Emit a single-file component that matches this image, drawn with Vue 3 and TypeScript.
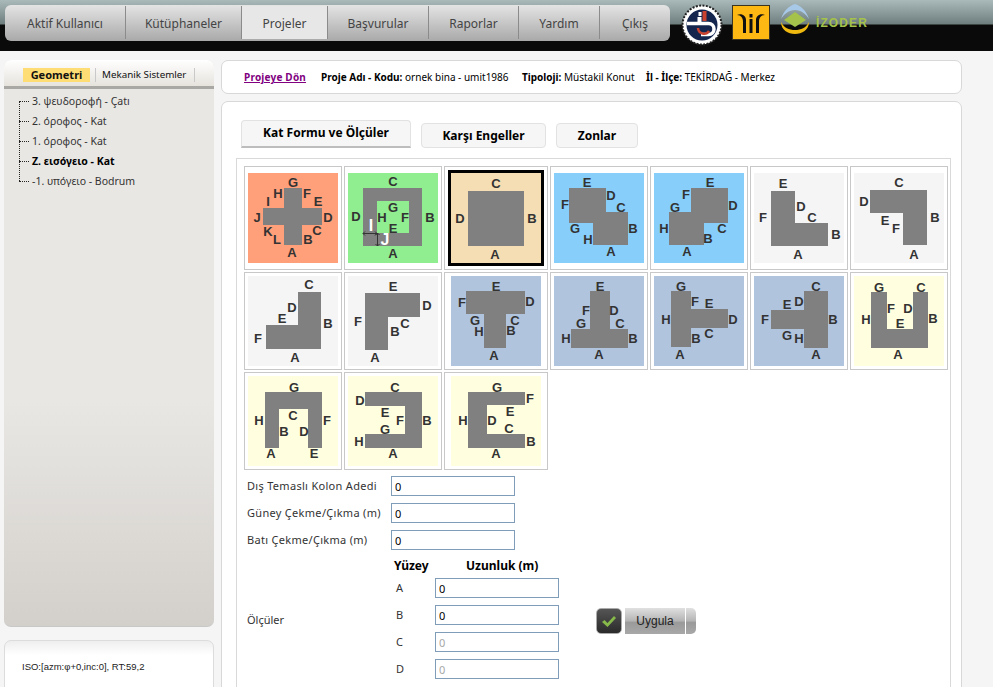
<template>
  <div class="page">
    <header class="topbar">
      <nav class="mainnav">
        <a
          v-for="item in navItems"
          :key="item.text"
          class="navitem"
          :class="{ active: item.active }"
          :style="{ width: item.width + 'px' }"
        >{{ item.text }}</a>
      </nav>
      <div class="logos">
        <svg class="logo-round" width="42" height="42" viewBox="0 0 42 42">
          <circle cx="21" cy="21" r="19.500" fill="#fff" />
          <circle cx="21" cy="21" r="19.500" fill="none" stroke="#222" stroke-width="2" stroke-dasharray="2 1.400" />
          <circle cx="21" cy="21" r="15.500" fill="#14264e" />
          <rect x="17.500" y="8" width="3" height="4" fill="#fff" />
          <rect x="21.500" y="7" width="4" height="10" fill="#c9412f" />
          <rect x="16.500" y="13" width="4" height="5" fill="#fff" />
          <path d="M6 19.500h21.500a5.500 5.500 0 0 1 0 11H20" fill="none" stroke="#fff" stroke-width="3.500" />
          <path d="M17 24a6 6 0 0 0 11 3" fill="none" stroke="#c9412f" stroke-width="2.500" />
        </svg>
        <svg class="logo-square" width="38" height="35" viewBox="0 0 38 35">
          <rect x="0.500" y="0.500" width="37" height="34" fill="#fdb813" stroke="#3a3320" />
          <path d="M5 10c4 0 6 3 6 7v11h3V15c0-4-4-7-9-5zM33 10c-4 0-6 3-6 7v11h-3V15c0-4 4-7 9-5z" fill="#111" />
          <rect x="17.500" y="9" width="3" height="3.500" fill="#111" />
          <rect x="17.500" y="14" width="3" height="14" fill="#111" />
        </svg>
        <div class="izoder">
          <svg width="32" height="32" viewBox="0 0 32 32">
            <path d="M2 15C5 6 10 2 16 0c6 2 11 6 14 15-3-5-8-9-14-9S5 10 2 15z" fill="#a8c8e8" />
            <path d="M16 8l11 8-11 7-11-7z" fill="#a5c34a" />
            <path d="M2 18c3 6 8 8 14 8s11-2 14-8c0 8-7 12-14 12S2 26 2 18z" fill="#f0b90f" />
          </svg>
          <span class="izoder-text">İZODER</span>
        </div>
      </div>
    </header>

    <div class="content">
      <aside class="leftcol">
        <div class="sidepanel">
          <div class="sidetabs">
            <span class="sidetab selected">Geometri</span>
            <span class="sidetab">Mekanik Sistemler</span>
          </div>
          <ul class="tree">
            <li
              v-for="floor in floors"
              :key="floor.text"
              :class="{ current: floor.current }"
            >{{ floor.text }}</li>
          </ul>
        </div>
        <div class="isobox">ISO:[azm:φ+0,inc:0], RT:59,2</div>
      </aside>

      <main class="rightcol">
        <div class="infobar">
          <a class="backlink">Projeye Dön</a>
          <span class="info info-name"><b>Proje Adı - Kodu:</b> ornek bina - umit1986</span>
          <span class="info info-type"><b>Tipoloji:</b> Müstakil Konut</span>
          <span class="info"><b>İl - İlçe:</b> TEKİRDAĞ - Merkez</span>
        </div>

        <div class="mainpanel">
          <div class="tabs">
            <button class="tab on">Kat Formu ve Ölçüler</button>
            <button class="tab engeller">Karşı Engeller</button>
            <button class="tab zonlar">Zonlar</button>
          </div>

          <div class="formbox">
            <div class="tiles">
              <div v-for="(tile, i) in tiles" :key="i" class="tile" :class="{ picked: tile.picked }">
                <svg class="shape" width="90" height="90" viewBox="0 0 90 90">
                  <rect width="90" height="90" :fill="tile.bg" />
                  <path v-if="tile.path" :d="tile.path" fill="#808080" fill-rule="evenodd" />
                  <polygon v-else :points="tile.points" fill="#808080" />
                  <g v-if="tile.arrows" stroke="#333" stroke-width="1" fill="none">
                    <path d="M15 60.500h14M17 58.500l-2 2 2 2M27 58.500l2 2-2 2" />
                    <path d="M29.500 60v13M27.500 62l2-2 2 2M27.500 71l2 2 2-2" />
                  </g>
                  <text
                    v-for="label in tile.labels"
                    :key="label.t"
                    :x="label.x"
                    :y="label.y"
                    class="letter"
                    :class="{ white: label.white }"
                  >{{ label.t }}</text>
                </svg>
              </div>
            </div>

            <div class="fields">
              <div v-for="field in fields" :key="field" class="field">
                <label>{{ field }}</label>
                <input type="text" value="0" />
              </div>
            </div>

            <div class="measures">
              <span class="measures-label">Ölçüler</span>
              <div class="measures-table">
                <div class="measures-head">
                  <b class="col-a">Yüzey</b>
                  <b class="col-b">Uzunluk (m)</b>
                </div>
                <div v-for="row in surfaces" :key="row.name" class="surface">
                  <span>{{ row.name }}</span>
                  <input type="text" value="0" :disabled="row.disabled" />
                </div>
              </div>
              <div class="applybtn">
                <span class="applyicon">
                  <svg width="16" height="13" viewBox="0 0 16 13">
                    <path d="M1 7l2.500-2 3 3L13 1l2 2-8.500 9z" fill="#86b84a" />
                  </svg>
                </span>
                <span class="applytext">Uygula</span>
                <span class="applyend"></span>
              </div>
            </div>
          </div>
        </div>
      </main>
    </div>
  </div>
</template>

<script setup lang="ts">
interface Label {
  t: string
  x: number
  y: number
  white?: boolean
}

interface Tile {
  bg: string
  points?: string
  path?: string
  arrows?: boolean
  picked?: boolean
  labels: Label[]
}

const navItems = [
  { text: 'Aktif Kullanıcı', width: 121 },
  { text: 'Kütüphaneler', width: 116 },
  { text: 'Projeler', width: 86, active: true },
  { text: 'Başvurular', width: 101 },
  { text: 'Raporlar', width: 90 },
  { text: 'Yardım', width: 81 },
  { text: 'Çıkış', width: 70 }
]

const floors = [
  { text: '3. ψευδοροφή - Çatı' },
  { text: '2. όροφος - Kat' },
  { text: '1. όροφος - Kat' },
  { text: 'Ζ. εισόγειο - Kat', current: true },
  { text: '-1. υπόγειο - Bodrum' }
]

const fields = ['Dış Temaslı Kolon Adedi', 'Güney Çekme/Çıkma (m)', 'Batı Çekme/Çıkma (m)']

const surfaces = [
  { name: 'A', disabled: false },
  { name: 'B', disabled: false },
  { name: 'C', disabled: true },
  { name: 'D', disabled: true }
]

// "A45,80" -> harf + konum
const parse = (s: string): Label[] =>
  s.split(' ').map((p) => {
    const [x, y] = p.slice(1).split(',')
    return { t: p[0], x: Number(x), y: Number(y) }
  })

const SALMON = '#ffa07a'
const GREEN = '#90ee90'
const WHEAT = '#f5deb3'
const SKY = '#87cefa'
const SMOKE = '#f5f5f5'
const STEEL = '#b0c4de'
const YELLOW = '#ffffe0'

const tiles: Tile[] = [
  {
    bg: SALMON,
    points: '36,15 54,15 54,35 74,35 74,52 54,52 54,72 36,72 36,52 15,52 15,35 36,35',
    labels: parse('G45,9 H30,20 F59,20 I20,28 E70,28 J9,44 D80,44 K20,58 C69,57 L29,66 B60,66 A44,79')
  },
  {
    bg: GREEN,
    path: 'M15 15H74V73H15ZM29 28V60H61V28Z',
    arrows: true,
    labels: [
      ...parse('C45,8 D8,43 B82,44 A45,80 G45,34 H34,44 F57,44 E45,55'),
      { t: 'I', x: 23, y: 52, white: true },
      { t: 'J', x: 37, y: 66, white: true }
    ]
  },
  {
    bg: WHEAT,
    picked: true,
    points: '17,18 73,18 73,73 17,73',
    labels: parse('C45,10 D9,45 B81,45 A44,81')
  },
  {
    bg: SKY,
    points: '15,15 52,15 52,39 74,39 74,72 39,72 39,50 15,50',
    labels: parse('E33,9 D57,22 C67,34 F11,31 B79,55 G21,55 H34,66 A57,78')
  },
  {
    bg: SKY,
    points: '37,15 74,15 74,50 50,50 50,72 15,72 15,39 37,39',
    labels: parse('E56,9 F32,21 D79,32 G21,34 H10,55 C68,55 B54,65 A33,78')
  },
  {
    bg: SMOKE,
    points: '17,18 41,18 41,50 74,50 74,73 17,73',
    labels: parse('E29,10 D47,33 C58,44 F9,44 B82,61 A44,81')
  },
  {
    bg: SMOKE,
    points: '16,17 73,17 73,72 49,72 49,40 16,40',
    labels: parse('C45,9 D10,28 B81,44 E31,47 F42,55 A60,81')
  },
  {
    bg: SMOKE,
    points: '50,16 73,16 73,73 18,73 18,49 50,49',
    labels: parse('C61,8 D44,31 E34,42 B80,47 F10,62 A47,81')
  },
  {
    bg: SMOKE,
    points: '17,17 72,17 72,41 40,41 40,74 17,74',
    labels: parse('E45,10 D79,29 F10,45 C57,47 B47,55 A27,81')
  },
  {
    bg: STEEL,
    points: '15,15 74,15 74,38 55,38 55,72 33,72 33,38 15,38',
    labels: parse('E45,10 F11,26 D79,25 G24,44 C64,44 H28,55 B60,54 A43,79')
  },
  {
    bg: STEEL,
    points: '36,15 56,15 56,53 74,53 74,72 17,72 17,53 36,53',
    labels: parse('E46,10 F32,34 D60,34 G27,47 C66,47 H12,62 B79,62 A45,78')
  },
  {
    bg: STEEL,
    points: '17,15 37,15 37,33 74,33 74,52 37,52 37,71 17,71',
    labels: parse('G27,10 F41,25 E55,27 H12,43 D79,43 C55,57 B42,62 A26,78')
  },
  {
    bg: STEEL,
    points: '50,15 74,15 74,72 50,72 50,53 17,53 17,34 50,34',
    labels: parse('C62,10 D45,25 E33,28 F11,43 B79,43 G33,59 H45,62 A62,78')
  },
  {
    bg: YELLOW,
    points: '17,16 33,16 33,53 59,53 59,16 74,16 74,72 17,72',
    labels: parse('G25,11 C67,11 F37,32 D54,32 H12,43 B79,42 E46,47 A44,78')
  },
  {
    bg: YELLOW,
    points: '17,16 74,16 74,72 60,72 60,33 31,33 31,72 17,72',
    labels: parse('G46,11 C45,39 H11,44 F79,44 B36,55 D56,55 A23,77 E66,77')
  },
  {
    bg: YELLOW,
    points: '17,16 74,16 74,72 17,72 17,58 57,58 57,30 17,30',
    labels: parse('C47,11 D12,24 E37,36 F52,44 B79,44 G37,53 H11,65 A45,77')
  },
  {
    bg: YELLOW,
    points: '17,16 74,16 74,29 36,29 36,58 74,58 74,72 17,72',
    labels: parse('G46,11 F79,22 E59,35 H12,44 D41,44 C58,52 B80,65 A45,77')
  }
]
</script>

<style>
html,
body {
  margin: 0;
  background: #f5f5f5;
  overflow: hidden;
}
</style>

<style scoped>
.page {
  width: 993px;
  height: 687px;
  overflow: hidden;
  font-family: "Noto Sans", "Liberation Sans", sans-serif;
  color: #000;
}

/* ust bar */
.topbar {
  height: 51px;
  display: flex;
  padding: 5px 0 0 5px;
  box-sizing: border-box;
  background: linear-gradient(#aab9b9 0, #6f7e7e 24px, #0a0a0a 25px, #0a0a0a 100%);
}

.mainnav {
  height: 36px;
  display: flex;
  border-radius: 6px;
  overflow: hidden;
  background: linear-gradient(#e4e4e4, #a9a9a9);
}

.navitem {
  box-sizing: border-box;
  display: flex;
  align-items: center;
  justify-content: center;
  padding-top: 1px;
  font-size: 12px;
  color: #444;
  border-right: 1px solid #8b8b8b;
  margin: 1px 0 2px;
}

.navitem:last-child {
  border-right: none;
}

.navitem.active {
  background: #e7e7e7;
}

.logos {
  display: flex;
  align-items: flex-start;
  margin-left: 11px;
}

.logo-round {
  margin-top: -1px;
}

.logo-square {
  margin-left: 9px;
}

.izoder {
  display: flex;
  align-items: center;
  margin-left: 9px;
  margin-top: -1px;
}

.izoder-text {
  font: bold 12px "Liberation Sans", sans-serif;
  letter-spacing: 1.100px;
  color: #a5c34a;
  margin: 6px 0 0 5px;
}

.content {
  display: flex;
  padding: 9px 0 0 4px;
  gap: 7px;
}

/* sol kolon */
.leftcol {
  width: 210px;
  display: flex;
  flex-direction: column;
  gap: 13px;
}

.sidepanel {
  box-sizing: border-box;
  height: 567px;
  border-radius: 7px;
  background: linear-gradient(#e9e7e4 60%, #d3d0cb);
  border-bottom: 1px solid #c8c8c8;
  overflow: hidden;
}

.sidetabs {
  height: 29px;
  box-sizing: border-box;
  display: flex;
  align-items: flex-start;
  padding: 8px 0 0 19px;
  background: linear-gradient(#ffffff, #e6e3dd);
  border-bottom: 3px solid #a9a8a4;
}

.sidetab {
  box-sizing: border-box;
  width: 100px;
  height: 14px;
  line-height: 14px;
  font-size: 9.800px;
  padding: 0 0 0 6px;
  border-left: 1px solid #c9c9c9;
  border-right: 1px solid #c9c9c9;
  color: #111;
  white-space: nowrap;
}

.sidetab.selected {
  width: 67px;
  padding: 0;
  margin-right: 5px;
  text-align: center;
  border: none;
  background: #ffdd75;
  font-weight: bold;
  font-size: 11px;
}

.tree {
  list-style: none;
  margin: 2px 0 0 15px;
  padding: 0;
  position: relative;
}

.tree::before {
  content: '';
  position: absolute;
  left: 0;
  top: 10px;
  height: 80px;
  border-left: 1px dotted #222;
}

.tree li {
  height: 20px;
  line-height: 20px;
  font-size: 10.500px;
  color: #333;
  padding-left: 13px;
  position: relative;
  white-space: nowrap;
}

.tree li::before {
  content: '';
  position: absolute;
  left: 0;
  top: 10px;
  width: 10px;
  border-top: 1px dotted #222;
}

.tree li.current {
  font-weight: bold;
  color: #000;
}

.isobox {
  height: 60px;
  box-sizing: border-box;
  padding: 20px 0 0 17px;
  border: 1px solid #dcdcdc;
  border-radius: 7px;
  background: linear-gradient(#eeeeee, #ffffff 14px);
  font: 9.500px "Liberation Sans", sans-serif;
  color: #222;
  white-space: nowrap;
}

/* sag kolon */
.rightcol {
  width: 741px;
  display: flex;
  flex-direction: column;
  gap: 7px;
}

.infobar {
  height: 34px;
  box-sizing: border-box;
  display: flex;
  align-items: center;
  padding-left: 22px;
  border: 1px solid #d8d8d8;
  border-radius: 7px;
  background: #fff;
  font-size: 10px;
  white-space: nowrap;
}

.backlink {
  font-weight: bold;
  color: #800080;
  text-decoration: underline;
  letter-spacing: 0.200px;
  width: 77px;
}

.info-name {
  width: 201px;
}

.info-type {
  width: 124px;
}

.mainpanel {
  height: 600px;
  box-sizing: border-box;
  border: 1px solid #d8d8d8;
  border-radius: 7px;
  background: #fff;
  padding: 18px 0 0 14px;
}

.tabs {
  display: flex;
  align-items: flex-end;
  margin-left: 5px;
  height: 28px;
}

.tab {
  height: 25px;
  padding: 0 0 1px;
  box-sizing: border-box;
  border: 1px solid #e2e2e2;
  border-radius: 4px;
  background: #f6f6f6;
  font: bold 12px "Noto Sans", "Liberation Sans", sans-serif;
  color: #000;
  margin-right: 10px;
}

.tab.on {
  width: 170px;
  height: 28px;
  padding-bottom: 2px;
  border-bottom: 2px solid #bdbdbd;
  border-radius: 4px 4px 0 0;
}

.tab.engeller {
  width: 125px;
}

.tab.zonlar {
  width: 82px;
}

.formbox {
  margin: 10px 0 0 0;
  width: 715px;
  border-top: 1px solid #d9d9d9;
  border-left: 1px solid #d9d9d9;
  border-right: 1px solid #d9d9d9;
  padding: 7px 0 0 7px;
  box-sizing: border-box;
  height: 540px;
}

.tiles {
  display: grid;
  grid-template-columns: 98px 98px 104px 98px 98px 98px 98px;
  gap: 2px;
}

.tile {
  box-sizing: border-box;
  min-height: 98px;
  border: 1px solid #c8c8c8;
  display: flex;
  align-items: center;
  justify-content: center;
}

.tile:nth-child(-n + 7) {
  height: 104px;
}

.shape {
  display: block;
}

.picked .shape {
  outline: 3px solid #000;
}

.letter {
  font: bold 13px "Liberation Sans", sans-serif;
  fill: #333;
  text-anchor: middle;
  dominant-baseline: central;
}

.letter.white {
  fill: #fff;
  font-size: 16px;
}

.fields {
  margin: 6px 0 0 3px;
  display: flex;
  flex-direction: column;
  gap: 7px;
}

.field {
  display: flex;
  align-items: center;
  font-size: 11px;
  color: #333;
}

.field label {
  width: 144px;
  padding-bottom: 2px;
  letter-spacing: 0.300px;
}

input {
  box-sizing: border-box;
  width: 124px;
  height: 20px;
  padding: 0 3px;
  border: 1px solid #7f9db9;
  background: #fff;
  font: 11px "Noto Sans", "Liberation Sans", sans-serif;
  color: #000;
  outline: none;
  display: block;
}

input:disabled {
  color: #a8a8a8;
}

.measures {
  display: flex;
  align-items: center;
  margin: 7px 0 0 3px;
  font-size: 11px;
  color: #333;
}

.measures-label {
  width: 147px;
}

.measures-head {
  display: flex;
  color: #000;
  height: 17px;
  align-items: center;
  font-size: 12px;
}

.col-a {
  width: 72px;
}

.surface {
  display: flex;
  align-items: center;
  box-sizing: border-box;
  height: 27px;
  padding-top: 3px;
  padding-bottom: 4px;
}

.surface input {
  margin-top: 1px;
  margin-bottom: -1px;
}

.surface span {
  width: 41px;
  padding-left: 2px;
  box-sizing: border-box;
}

.applybtn {
  display: flex;
  align-items: stretch;
  height: 26px;
  margin: 3px 0 0 37px;
}

.applyicon {
  width: 26px;
  box-sizing: border-box;
  display: flex;
  align-items: center;
  justify-content: center;
  border-radius: 5px;
  border: 1px solid #aaa;
  background: linear-gradient(#555, #2a2a2a);
}

.applytext {
  width: 60px;
  margin-left: 3px;
  display: flex;
  align-items: center;
  justify-content: center;
  background: linear-gradient(#e0e0e0, #b4b4b4 50%, #9a9a9a 55%, #a8a8a8);
  font: 12px "Liberation Sans", sans-serif;
  color: #222;
}

.applyend {
  width: 10px;
  margin-left: 1px;
  border-radius: 0 5px 5px 0;
  background: linear-gradient(#e0e0e0, #b4b4b4 50%, #9a9a9a 55%, #a8a8a8);
}
</style>
